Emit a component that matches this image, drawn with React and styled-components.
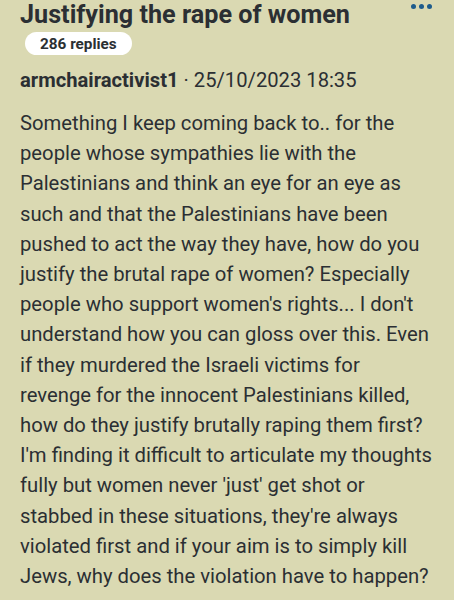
import styled, { createGlobalStyle } from "styled-components"

const GlobalStyle = createGlobalStyle`
    html, body {
        margin: 0;
        padding: 0;
        background: #dad9b2;
    }
    body {
        font-family: Roboto, "Noto Sans", sans-serif;
        color: #2b2f33;
    }
`

const Page = styled.div`
    width: 454px;
    height: 600px;
    overflow: hidden;
    background: #dad9b2;
    padding: 0 20px;
    box-sizing: border-box;
`

const TitleRow = styled.div`
    display: flex;
    justify-content: space-between;
    align-items: flex-start;
    margin-top: -1px;
`

const Title = styled.h1`
    margin: 0;
    font-size: 25.2px;
    line-height: 32px;
    font-weight: 700;
    color: #2b2f33;
    white-space: nowrap;
`

const MoreButton = styled.div`
    display: flex;
    gap: 3px;
    padding-top: 5px;
    margin-right: 2px;
`

const Dot = styled.span`
    width: 5px;
    height: 5px;
    border-radius: 50%;
    background: #1e5c8c;
`

const RepliesPill = styled.span`
    display: inline-flex;
    align-items: center;
    height: 23px;
    padding: 0 15px;
    margin: 1px 0 0 5px;
    border-radius: 12px;
    background: #ffffff;
    font-size: 15.3px;
    font-weight: 700;
    color: #2b2f33;
`

const Meta = styled.div`
    margin-top: 13px;
    font-size: 20.2px;
    line-height: 24px;
    color: #2b2f33;
`

const Author = styled.span`
    font-weight: 700;
`

const Body = styled.p`
    margin: 16px 0 0;
    font-size: 20.25px;
    line-height: 30.2px;
    color: #2b2f33;
`

const App = () => {
    return (
        <>
            <GlobalStyle />
            <Page>
                <TitleRow>
                    <Title>Justifying the rape of women</Title>
                    <MoreButton>
                        <Dot />
                        <Dot />
                        <Dot />
                    </MoreButton>
                </TitleRow>
                <RepliesPill>286 replies</RepliesPill>
                <Meta>
                    <Author>armchairactivist1</Author> · 25/10/2023 18:35
                </Meta>
                <Body>
                    Something I keep coming back to.. for the people whose sympathies lie with the Palestinians and think an eye for an eye as such and that the Palestinians have been pushed to act the way they have, how do you justify the brutal rape of women? Especially people who support women's rights... I don't understand how you can gloss over this. Even if they murdered the Israeli victims for revenge for the innocent Palestinians killed, how do they justify brutally raping them first? I'm finding it difficult to articulate my thoughts fully but women never 'just' get shot or stabbed in these situations, they're always violated first and if your aim is to simply kill Jews, why does the violation have to happen?
                </Body>
            </Page>
        </>
    )
}

export default App
